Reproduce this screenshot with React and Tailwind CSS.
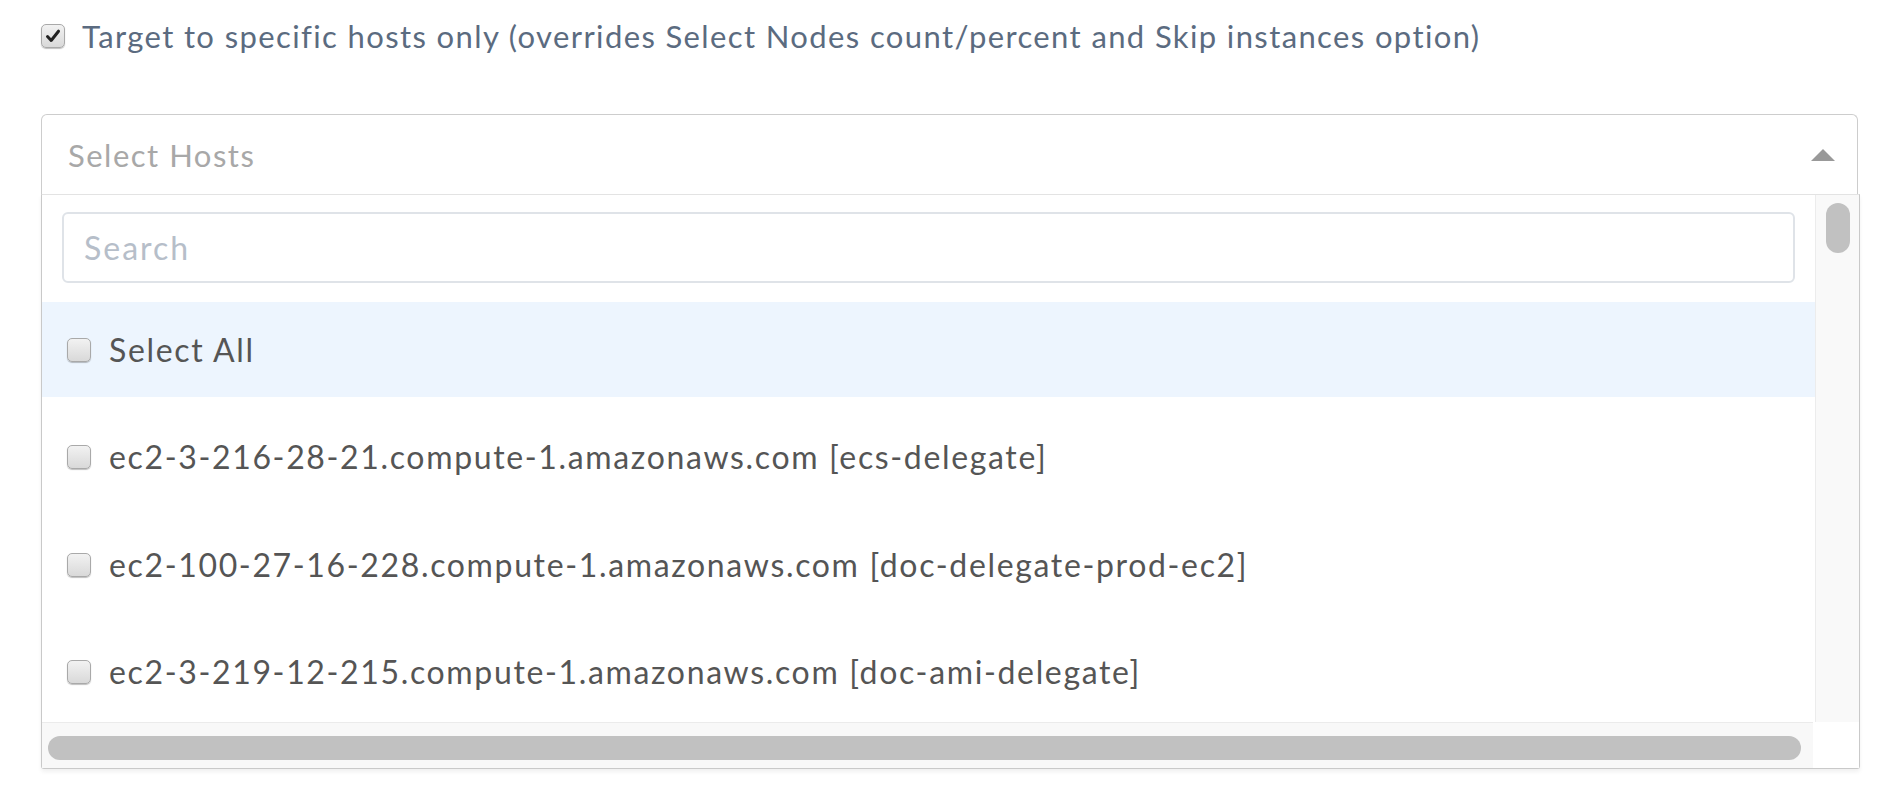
import React from 'react';

const hosts = [
  'ec2-3-216-28-21.compute-1.amazonaws.com [ecs-delegate]',
  'ec2-100-27-16-228.compute-1.amazonaws.com [doc-delegate-prod-ec2]',
  'ec2-3-219-12-215.compute-1.amazonaws.com [doc-ami-delegate]',
];

function Box({ checked }) {
  return (
    <div className="w-[24px] h-[24px] shrink-0 rounded-[5px] border border-[#a9a9a9] bg-gradient-to-b from-[#f2f2f2] to-[#d9d9d9] shadow-[0_1px_1px_rgba(0,0,0,0.25)] flex items-center justify-center">
      {checked && (
        <svg width="16" height="16" viewBox="0 0 16 16">
          <path d="M2.5 8.5 L6.2 12.5 L13.5 3.2" fill="none" stroke="#222" strokeWidth="3" strokeLinecap="round" strokeLinejoin="round" />
        </svg>
      )}
    </div>
  );
}

function Row({ label, active }) {
  return (
    <div className={`h-[95px] shrink-0 flex items-center pl-[25px] gap-[18px] ${active ? 'bg-[#edf5fe]' : ''}`}>
      <Box />
      <span className="text-[32px] leading-none tracking-[1.65px] text-[#555] whitespace-nowrap">{label}</span>
    </div>
  );
}

export default function App() {
  return (
    <div className="w-[1896px] h-[792px] bg-white overflow-hidden pt-[23px] pl-[41px]" style={{ fontFamily: 'Lato, "Open Sans", sans-serif' }}>
      <div className="flex items-center h-[26px] gap-[17px]">
        <Box checked />
        <span className="text-[31px] leading-none tracking-[1.38px] text-[#5b6b80] whitespace-nowrap">
          Target to specific hosts only (overrides Select Nodes count/percent and Skip instances option)
        </span>
      </div>

      <div className="mt-[65px] w-[1819px]">
        <div className="w-[1817px] h-[80px] border-t border-x border-[#cdcdcd] rounded-t-[6px] flex items-center justify-between pl-[26px] pr-[22px]">
          <span className="text-[31px] leading-none tracking-[1.5px] text-[#a8a8a8] pt-[2px]">Select Hosts</span>
          <div className="w-0 h-0 border-l-[12px] border-r-[12px] border-b-[12px] border-l-transparent border-r-transparent border-b-[#999]" />
        </div>

        <div className="h-[575px] border-t border-[#e3e3e3] border-x border-b border-x-[#c9c9c9] border-b-[#c9c9c9] rounded-b-[3px] flex flex-col shadow-[0_3px_4px_rgba(0,0,0,0.06)]">
          <div className="flex flex-1 min-h-0">
            <div className="flex-1 min-w-0 overflow-hidden flex flex-col pt-[17px]">
              <div className="mx-[20px] h-[71px] shrink-0 border-2 border-[#dfe3e8] rounded-[6px] flex items-center pl-[20px]">
                <span className="text-[32px] leading-none tracking-[2px] text-[#b6bec9]">Search</span>
              </div>
              <div className="mt-[19px] flex flex-col gap-[12.5px]">
                <Row label="Select All" active />
                {hosts.map((h) => (
                  <Row key={h} label={h} />
                ))}
              </div>
            </div>
            <div className="w-[44px] shrink-0 bg-[#f9f9f9] border-l border-[#ececec] pt-[8px] flex justify-center">
              <div className="w-[24px] h-[50px] rounded-full bg-[#c1c1c1]" />
            </div>
          </div>
          <div className="flex h-[46px] shrink-0">
            <div className="flex-1 bg-[#f8f8f8] border-t border-[#ebebeb] pl-[6px] pr-[12px] pt-[13px]">
              <div className="w-full h-[24px] rounded-full bg-[#c1c1c1]" />
            </div>
            <div className="w-[46px] bg-white" />
          </div>
        </div>
      </div>
    </div>
  );
}
